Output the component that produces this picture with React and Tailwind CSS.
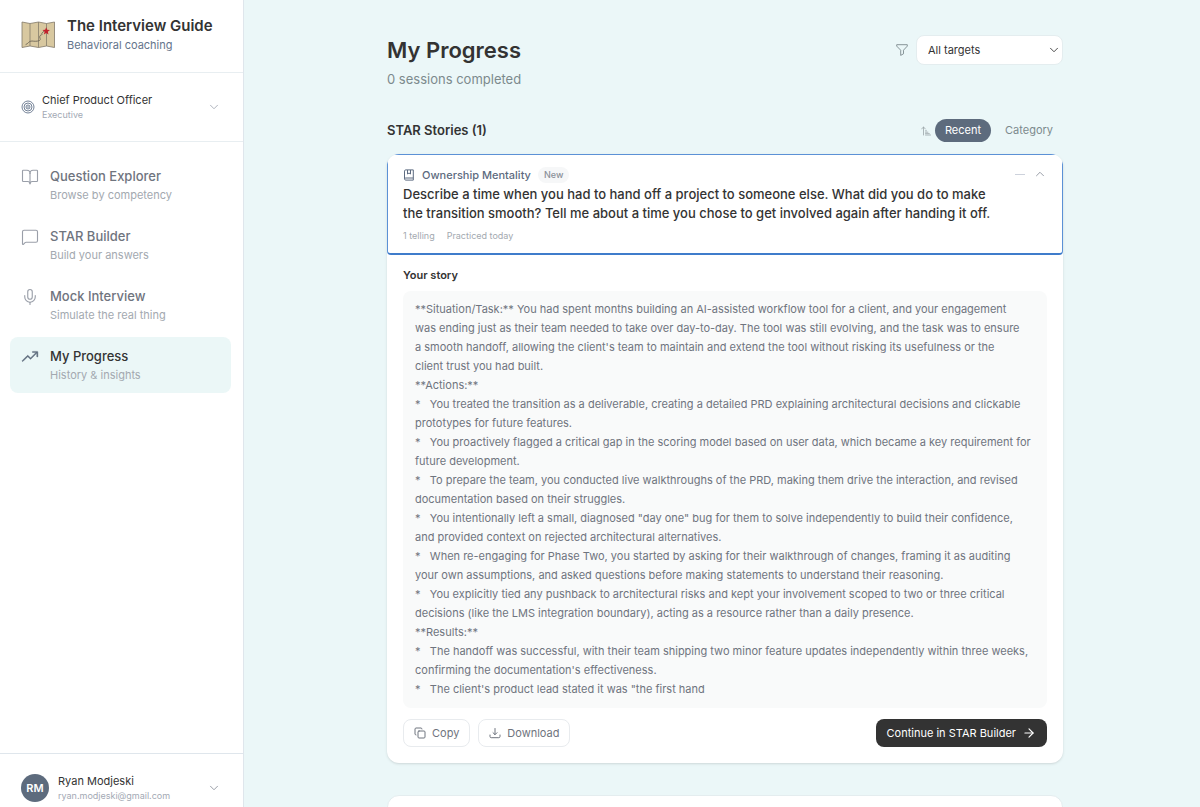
import { useState } from "react";
import { ArrowRight, BookOpen, ChevronDown, ChevronUp, Copy, MessageSquare, Mic } from "lucide-react";
import { PiTrendUp } from "react-icons/pi";

const navItems = [
    { id: "explorer", title: "Question Explorer", text: "Browse by competency", Icon: BookOpen },
    { id: "builder", title: "STAR Builder", text: "Build your answers", Icon: MessageSquare },
    { id: "mock", title: "Mock Interview", text: "Simulate the real thing", Icon: Mic },
    { id: "progress", title: "My Progress", text: "History & insights", Icon: PiTrendUp },
];

const story = [
    "**Situation/Task:** You had spent months building an AI-assisted workflow tool for a client, and your engagement",
    "was ending just as their team needed to take over day-to-day. The tool was still evolving, and the task was to ensure",
    "a smooth handoff, allowing the client's team to maintain and extend the tool without risking its usefulness or the",
    "client trust you had built.",
    "**Actions:**",
    "*   You treated the transition as a deliverable, creating a detailed PRD explaining architectural decisions and clickable",
    "prototypes for future features.",
    "*   You proactively flagged a critical gap in the scoring model based on user data, which became a key requirement for",
    "future development.",
    "*   To prepare the team, you conducted live walkthroughs of the PRD, making them drive the interaction, and revised",
    "documentation based on their struggles.",
    "*   You intentionally left a small, diagnosed \"day one\" bug for them to solve independently to build their confidence,",
    "and provided context on rejected architectural alternatives.",
    "*   When re-engaging for Phase Two, you started by asking for their walkthrough of changes, framing it as auditing",
    "your own assumptions, and asked questions before making statements to understand their reasoning.",
    "*   You explicitly tied any pushback to architectural risks and kept your involvement scoped to two or three critical",
    "decisions (like the LMS integration boundary), acting as a resource rather than a daily presence.",
    "**Results:**",
    "*   The handoff was successful, with their team shipping two minor feature updates independently within three weeks,",
    "confirming the documentation's effectiveness.",
    "*   The client's product lead stated it was \"the first hand",
].join("\n");

function MapLogo() {
    return (
        <svg viewBox="0 0 34 30" className="h-[30px] w-[34px] shrink-0" fill="none" aria-hidden="true">
            <path d="M1 2l8 1.500 8.500-1.500 8 1.500L33.500 2v25.500L25.500 26l-8 1.500L9 26l-8 1.500z" fill="#d8c8a0" stroke="#82796a" strokeWidth=".8" strokeLinejoin="round" />
            <path d="M9 3.500V26M17.500 2v25.500M25.500 3.500V26" stroke="#857c69" strokeWidth=".8" />
            <path d="M5 24.500c2-.5 3-3.800 6-3.500 2.500.3 5 .6 7.500-.5 2-1-.8-3.500.5-4.800 1-1 2.500-.4 1.800-2.200l1.700-2" stroke="#6f6858" strokeWidth=".9" strokeLinecap="round" />
            <path d="M25.200 7.200l1 2.500 2.700.2-2.100 1.800.7 2.700-2.300-1.500-2.300 1.500.7-2.700-2.100-1.800 2.700-.2z" fill="#c0202c" />
        </svg>
    );
}

function TargetIcon() {
    return (
        <svg viewBox="0 0 14 14" className="size-3.5 shrink-0" fill="none" stroke="#64748b" aria-hidden="true">
            <circle cx="7" cy="7" r="6" strokeWidth=".9" />
            <circle cx="7" cy="7" r="4" strokeWidth=".9" />
            <circle cx="7" cy="7" r="2" strokeWidth=".9" />
            <circle cx="7" cy="7" r=".5" fill="#64748b" strokeWidth=".5" />
        </svg>
    );
}

function FunnelIcon() {
    return (
        <svg viewBox="0 0 12 12" className="size-3 shrink-0" fill="none" stroke="#7c8a8d" strokeWidth=".9" strokeLinejoin="round" aria-hidden="true">
            <path d="M.7.700h10.600v1.400L7.500 6.200v3.600L4.700 11.400V6.200L.7 2.100z" />
        </svg>
    );
}

function SortIcon() {
    return (
        <svg viewBox="0 0 10 10" className="size-2.5 shrink-0" fill="none" stroke="#9aa5a8" strokeWidth=".8" strokeLinecap="round" strokeLinejoin="round" aria-hidden="true">
            <path d="M2.500 9V1M.6 3l1.900-2 1.900 2M4.500 4.800h1M4.500 6.200h2.400M4.500 7.600h3.800M4.500 9h5" />
        </svg>
    );
}

function JournalIcon() {
    return (
        <svg viewBox="0 0 12 12" className="size-3 shrink-0" fill="none" stroke="#5d6b80" strokeLinejoin="round" aria-hidden="true">
            <path d="M10.300 9V.900H2.700c-.7 0-1.200.5-1.200 1.200v7.700c0 .8.500 1.300 1.200 1.300h7.600V9H2.700c-.7 0-1.200.4-1.200.9M4.500 1v4l1.500-1 1.500 1V1" />
        </svg>
    );
}

function DownloadIcon() {
    return (
        <svg viewBox="0 0 12 12" className="size-3 shrink-0" fill="none" stroke="currentColor" strokeLinecap="round" strokeLinejoin="round" aria-hidden="true">
            <path d="M6 1.500v6M4 5.700l2 2 2-2M1 8v1.500c0 .7.400 1.200 1.200 1.200h7.600c.8 0 1.200-.5 1.200-1.200V8" />
        </svg>
    );
}

function SideBar({ page, setPage }) {
    return (
        <aside className="flex h-full w-[244px] shrink-0 flex-col border-r border-[#dfe6ec] bg-white">
            <div className="flex h-[73px] items-center gap-3 border-b border-[#e8eef1] px-[21px] pb-0.5">
                <MapLogo />
                <div>
                    <p className="text-[15px] leading-5 font-semibold whitespace-nowrap text-[#333]">The Interview Guide</p>
                    <p className="text-[11px] leading-[18px] text-[#64748b]">Behavioral coaching</p>
                </div>
            </div>

            <button type="button" className="flex h-[69px] items-center gap-[7px] border-b border-[#e8eef1] px-[21px] text-left">
                <TargetIcon />
                <span className="flex-1">
                    <span className="block text-[11px] leading-4 text-[#333]">Chief Product Officer</span>
                    <span className="block text-[9px] leading-[14px] text-[#a3a9b4]">Executive</span>
                </span>
                <ChevronDown className="mr-px size-3.5 text-[#a3a9b4]" strokeWidth={1.5} />
            </button>

            <nav className="flex flex-col gap-1 px-2.5 pt-[15px]">
                {navItems.map(({ id, title, text, Icon }) => (
                    <button
                        key={id}
                        type="button"
                        onClick={() => setPage(id)}
                        aria-current={page === id ? "page" : undefined}
                        className={`mr-0.5 flex h-14 items-start gap-[11px] rounded-lg px-[11px] pt-2.5 text-left ${page === id ? "bg-[#ebf7f7]" : ""}`}
                    >
                        <Icon strokeWidth={page === id ? 6 : 1.5} className={`mt-px size-[18px] shrink-0 ${page === id ? "text-[#5d6b7d]" : "text-[#9a9fa9]"}`} />
                        <span>
                            <span className={`block text-[13px] leading-[19px] font-medium ${page === id ? "text-[#333]" : "text-[#6f747e]"}`}>{title}</span>
                            <span className="block text-[11px] leading-[18px] text-[#a3a9b0]">{text}</span>
                        </span>
                    </button>
                ))}
            </nav>

            <div className="mt-auto border-t border-[#dfe6ec]">
                <button type="button" className="flex w-full items-center gap-[9px] px-[21px] pt-[19px] pb-1 text-left">
                    <span className="flex size-7 items-center justify-center rounded-full bg-[#5d6b7d] text-[11px] font-semibold text-white">RM</span>
                    <span className="flex-1">
                        <span className="block text-[11px] leading-4 text-[#333]">Ryan Modjeski</span>
                        <span className="block text-[9px] leading-[14px] text-[#a3a9b4]">ryan.modjeski@gmail.com</span>
                    </span>
                    <ChevronDown className="mr-px size-3.5 text-[#8b919c]" strokeWidth={1.5} />
                </button>
            </div>
        </aside>
    );
}

function StoryCard() {
    const [open, setOpen] = useState(true);

    return (
        <article className="overflow-hidden rounded-xl bg-white shadow-sm">
            <button
                type="button"
                aria-expanded={open}
                onClick={() => setOpen(!open)}
                className="flex w-full items-start rounded-b-sm border border-b-2 border-[#5b91d6] border-b-[#3f7ccb] px-[15px] pt-2.5 pb-[9px] text-left"
            >
                <span className="flex-1">
                    <span className="flex h-5 items-center gap-[7px] text-[11px] font-medium text-[#5d6b80]">
                        <JournalIcon />
                        Ownership Mentality
                        <span className="rounded-full bg-[#f6f7f8] px-1.5 text-[9px] leading-4 text-[#8b9098]">New</span>
                    </span>
                    <span className="block text-[13px] leading-[19px] font-medium whitespace-pre-line text-[#333]">
                        {"Describe a time when you had to hand off a project to someone else. What did you do to make\nthe transition smooth? Tell me about a time you chose to get involved again after handing it off."}
                    </span>
                    <span className="mt-[5px] flex gap-3 text-[9px] leading-4 text-[#a3a9b0]">
                        <span>1 telling</span>
                        <span>Practiced today</span>
                    </span>
                </span>
                <span className="flex h-[18px] items-center gap-2">
                    <span className="h-px w-2.5 bg-[#cdd2dc]" />
                    <ChevronUp className="size-3.5 text-[#8b919c]" strokeWidth={1.5} />
                </span>
            </button>

            {open && (
                <div className="px-4 pt-2.5 pb-4">
                    <h3 className="text-[11px] leading-5 font-semibold text-[#333]">Your story</h3>
                    <p className="mt-1.5 rounded-lg bg-[#f9fafa] px-3 py-[9px] text-[11px] leading-[19px] whitespace-pre-wrap text-[#6f747e]">{story}</p>
                    <div className="mt-[11px] flex items-center gap-2">
                        <button type="button" className="flex h-7 items-center gap-1.5 rounded-lg border border-[#e8ebee] px-2.5 text-[11px] text-[#6f747e]">
                            <Copy className="size-3" strokeWidth={2} />
                            Copy
                        </button>
                        <button type="button" className="flex h-7 items-center gap-1.5 rounded-lg border border-[#e8ebee] px-2.5 text-[11px] text-[#6f747e]">
                            <DownloadIcon />
                            Download
                        </button>
                        <button type="button" className="ml-auto flex h-7 items-center gap-1.5 rounded-lg bg-[#333] px-[11px] text-[11px] text-white">
                            Continue in STAR Builder
                            <ArrowRight className="size-3.5" strokeWidth={2} />
                        </button>
                    </div>
                </div>
            )}
        </article>
    );
}

export default function App() {
    const [page, setPage] = useState("progress");
    const [sort, setSort] = useState("Recent");

    return (
        <div className="flex h-screen overflow-hidden bg-[#ebf7f8] font-['Inter',sans-serif]">
            <SideBar page={page} setPage={setPage} />

            <main className="min-w-0 flex-1 overflow-hidden pl-1.5">
                <div className="mx-auto w-full max-w-[676px] pt-[35px]">
                    <header className="flex items-start justify-between">
                        <div>
                            <h1 className="text-[22px] leading-[30px] font-semibold text-[#333]">My Progress</h1>
                            <p className="mt-1 text-[13px] leading-5 text-[#7c8a8d]">0 sessions completed</p>
                        </div>
                        <div className="flex items-center gap-2">
                            <FunnelIcon />
                            <div className="relative">
                                <select aria-label="Target" className="h-[30px] w-[147px] appearance-none rounded-lg border border-[#e4edef] bg-white px-[11px] text-[11px] text-[#333]">
                                    <option>All targets</option>
                                    <option>Chief Product Officer</option>
                                </select>
                                <ChevronDown className="pointer-events-none absolute top-2 right-0.5 size-3.5 text-[#333]" strokeWidth={1.5} />
                            </div>
                        </div>
                    </header>

                    <div className="mt-[30px] mb-3 flex items-center">
                        <h2 className="text-[13px] leading-[23px] font-semibold text-[#333]">STAR Stories (1)</h2>
                        <div className="ml-auto flex items-center gap-1">
                            <SortIcon />
                            {["Recent", "Category"].map((name) => (
                                <button
                                    key={name}
                                    type="button"
                                    onClick={() => setSort(name)}
                                    className={`h-[23px] rounded-full px-2.5 text-[11px] ${sort === name ? "bg-[#5d6b7d] text-white" : "text-[#7c8a8d]"}`}
                                >
                                    {name}
                                </button>
                            ))}
                        </div>
                    </div>

                    <StoryCard />

                    <section className="mt-8 h-40 rounded-xl border border-[#e4edef] bg-white" />
                </div>
            </main>
        </div>
    );
}
